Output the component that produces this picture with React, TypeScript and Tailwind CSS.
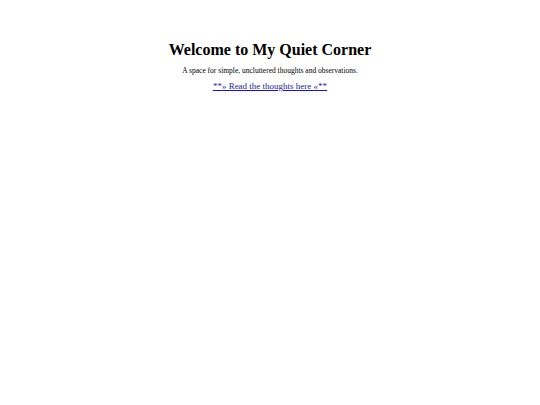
export default function App() {
  return (
    <div className="min-h-[405px] bg-white text-black font-['Liberation_Serif',serif]">
      <div className="flex flex-col items-center pt-[40px]">
        <h1 className="text-[16px] font-bold leading-[20px]">Welcome to My Quiet Corner</h1>
        <p className="mt-[6px] text-[7.5px] leading-[10px]">A space for simple, uncluttered thoughts and observations.</p>
        <a href="#" className="mt-[4px] text-[9px] leading-[12px] text-[#1a1aa8] underline">
          **» Read the thoughts here «**
        </a>
      </div>
    </div>
  );
}
